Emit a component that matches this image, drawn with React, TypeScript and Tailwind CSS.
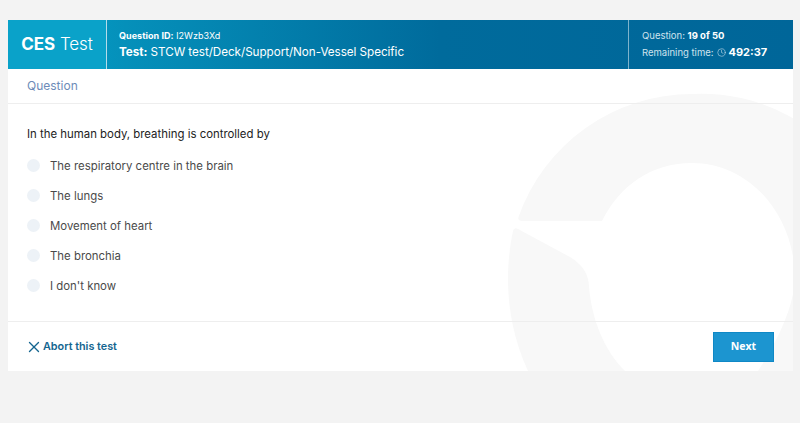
import { Clock, X } from "lucide-react";

const OPTIONS = [
  "The respiratory centre in the brain",
  "The lungs",
  "Movement of heart",
  "The bronchia",
  "I don't know",
];

const HEAD_FONT = "font-['Inter','Liberation_Sans',sans-serif]";

function Watermark() {
  return (
    <svg
      className="absolute inset-0 h-full w-full"
      viewBox="8 20 785 351"
      fill="#f8f8f8"
      aria-hidden="true"
    >
      <path d="M522 221Q517.500 221 518.500 217A184 184 0 0 1 692 94A184 184 0 0 1 860 371L758 371C775 345 793 310 795 280C795 215 750 163 692 163C652 163 620 185 602 221Z" />
      <path d="M518 229L570 257C583 265 589 275 589 287C592 320 604 350 625 371L528 371C514 340 508 310 508 278C508 262 510 245 513 231Q514 227 518 229Z" />
    </svg>
  );
}

export default function App() {
  return (
    <div className={`min-h-[423px] bg-[#f3f3f3] pl-2 pr-[7px] pt-5 ${HEAD_FONT}`}>
      <div className="relative h-[351px] overflow-hidden bg-white">
        <Watermark />
        <div className="relative flex h-full flex-col">
          <header className="flex h-[49px] shrink-0 bg-[linear-gradient(90deg,#00a3cc_0%,#0590ba_15%,#006b9c_55%,#006699_100%)] text-white">
            <div className="flex w-[99px] shrink-0 items-center justify-center border-r border-[#b5dcea] bg-[#0aa2c9] text-[17px] tracking-[-0.1px]">
              <span className="font-bold">CES</span>
              <span className="ml-[5px] font-light">Test</span>
            </div>
            <div className="flex flex-1 flex-col justify-center gap-[3px] pl-3">
              <div className="text-[9px] leading-[12px] tracking-[0.05px]">
                <span className="font-bold">Question ID:</span> l2Wzb3Xd
              </div>
              <div className="text-[11.700px] leading-[15px] tracking-[-0.05px]">
                <span className="font-bold">Test:</span> STCW test/Deck/Support/Non-Vessel Specific
              </div>
            </div>
            <div className="flex w-[165px] shrink-0 flex-col justify-center gap-[3px] border-l border-[#7fb3cc] pl-[13px]">
              <div className="text-[9.500px] leading-[12px] text-[#cfe3ee]">
                Question: <span className="font-bold text-white">19 of 50</span>
              </div>
              <div className="flex items-center text-[9.500px] leading-[15px] text-[#cfe3ee]">
                Remaining time:
                <Clock className="ml-[3px] h-[9px] w-[9px]" strokeWidth={1.5} />
                <span className="ml-[3px] text-[11px] font-bold text-white">492:37</span>
              </div>
            </div>
          </header>

          <div className="flex h-[35px] shrink-0 items-center border-b border-[#eeeeee] pl-[19px] text-[12px] text-[#6d8bb8]">
            Question
          </div>

          <main className="flex-1 pl-[19px] pt-[22px]">
            <p className="text-[11.400px] leading-[16px] text-[#222222]">
              In the human body, breathing is controlled by
            </p>
            <ul className="mt-[10px]">
              {OPTIONS.map((option) => (
                <li key={option} className="flex h-[30px] items-center text-[11.400px] text-[#4a4a4a]">
                  <span className="mr-[10px] mt-[-3px] h-[13px] w-[13px] shrink-0 rounded-full bg-[#edf2f7]" />
                  {option}
                </li>
              ))}
            </ul>
          </main>

          <footer className="flex h-[50px] shrink-0 items-center justify-between border-t border-[#eeeeee] px-[19px] pt-px">
            <div className="flex items-center text-[10.800px] font-semibold text-[#14658f]">
              <X className="-ml-[2px] h-[18px] w-[18px]" strokeWidth={1.8} />
              Abort this test
            </div>
            <button className="h-[30px] w-[61px] border border-[#0f88c6] bg-[#1c95d0] font-['Open_Sans',sans-serif] text-[10.500px] font-bold text-white">
              Next
            </button>
          </footer>
        </div>
      </div>
    </div>
  );
}
